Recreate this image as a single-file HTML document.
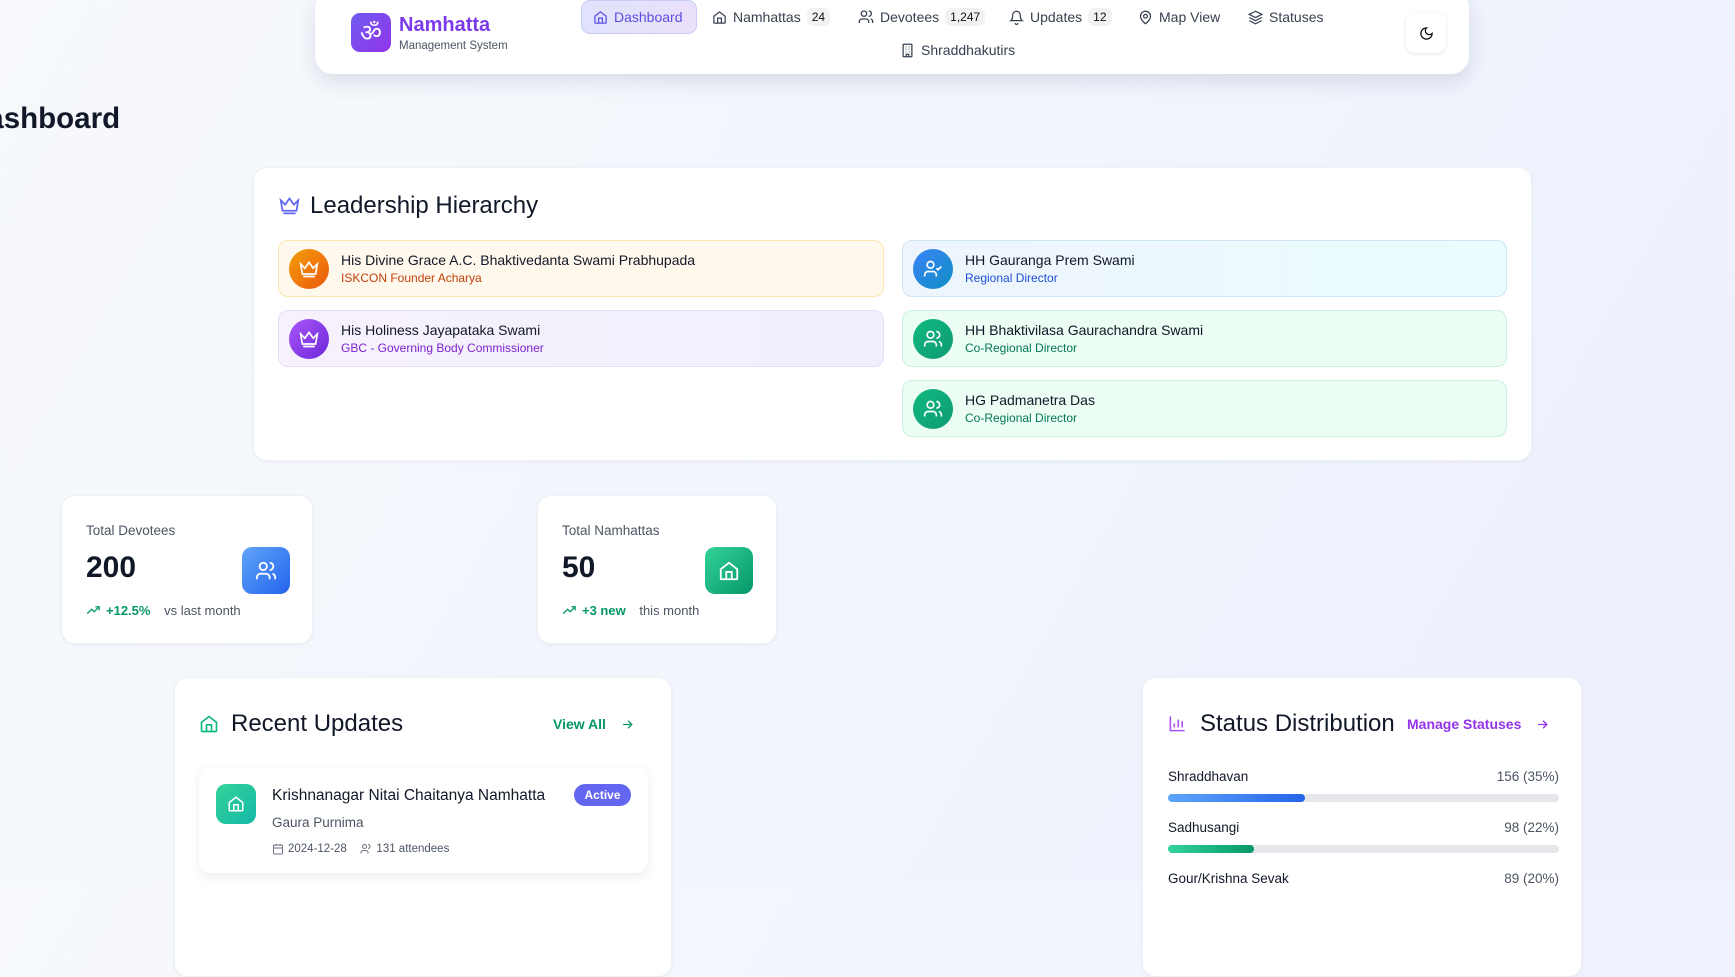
<!DOCTYPE html>
<html><head><meta charset="utf-8"><style>
*{box-sizing:border-box;margin:0;padding:0}
body{width:1735px;height:881px;overflow:hidden;position:relative;font-family:"Liberation Sans",sans-serif;background:linear-gradient(120deg,#f7f9fc 0%,#f1f5fc 50%,#eceffc 100%);color:#111827}
.abs{position:absolute}
.card{position:absolute;background:#fff;border-radius:14px;box-shadow:0 1px 3px rgba(0,0,0,.05);border:1px solid #eef1f6}
svg{display:block}
.nav{left:315px;top:-10px;width:1154px;height:84px;background:#fff;border-radius:18px;box-shadow:0 8px 20px rgba(30,40,80,.12)}
.ni{position:absolute;display:flex;align-items:center;gap:6px;font-size:14px;color:#374151;height:34px;top:0}
.badge{background:#f1f2f4;border-radius:6px;font-size:12px;padding:2px 5px;color:#111}
.lr{position:absolute;height:57px;border-radius:10px;display:flex;align-items:center;padding-left:10px}
.av{width:40px;height:40px;border-radius:50%;display:flex;align-items:center;justify-content:center;margin-right:12px}
.ln{font-size:14px;color:#111827;margin-bottom:3px}
.ls{font-size:12px}
.lab{font-size:13.5px;color:#4b5563}
</style></head><body>
<div class="abs nav">
  <div class="abs" style="left:36px;top:23px;width:40px;height:39px;border-radius:9px;background:linear-gradient(135deg,#6d5cf0,#9333ea);color:#fff;font-size:24px;display:flex;align-items:center;justify-content:center;font-family:'DejaVu Sans',sans-serif">ॐ</div>
  <div class="abs" style="left:84px;top:24px;font-size:20px;font-weight:bold;color:#7c3aed">Namhatta</div>
  <div class="abs" style="left:84px;top:50px;font-size:11.5px;color:#4b5563">Management System</div>
</div>
<div class="abs" style="left:581px;top:0;width:116px;height:34px;border-radius:9px;background:linear-gradient(90deg,#dfe3fb,#ebe0fb);border:1px solid #c9cdf5"></div>
<div class="ni" style="left:593px;color:#5b4ee0"><svg width="15" height="15" viewBox="0 0 24 24" fill="none" stroke="currentColor" stroke-width="2"><path d="M3 10l9-7 9 7v10a1 1 0 0 1-1 1H4a1 1 0 0 1-1-1z"/><path d="M9 21v-8h6v8"/></svg>Dashboard</div>
<div class="ni" style="left:712px"><svg width="15" height="15" viewBox="0 0 24 24" fill="none" stroke="currentColor" stroke-width="2"><path d="M3 10l9-7 9 7v10a1 1 0 0 1-1 1H4a1 1 0 0 1-1-1z"/><path d="M9 21v-8h6v8"/></svg>Namhattas <span class="badge">24</span></div>
<div class="ni" style="left:858px"><svg width="16" height="16" viewBox="0 0 24 24" fill="none" stroke="currentColor" stroke-width="2"><circle cx="9" cy="7" r="4"/><path d="M2 21v-2a4 4 0 0 1 4-4h6a4 4 0 0 1 4 4v2M16 3a4 4 0 0 1 0 8M22 21v-2a4 4 0 0 0-3-4"/></svg>Devotees <span class="badge">1,247</span></div>
<div class="ni" style="left:1009px"><svg width="15" height="15" viewBox="0 0 24 24" fill="none" stroke="currentColor" stroke-width="2"><path d="M6 8a6 6 0 0 1 12 0c0 7 3 9 3 9H3s3-2 3-9M10 21a2 2 0 0 0 4 0"/></svg>Updates <span class="badge">12</span></div>
<div class="ni" style="left:1138px"><svg width="15" height="15" viewBox="0 0 24 24" fill="none" stroke="currentColor" stroke-width="2"><path d="M20 10c0 6-8 12-8 12S4 16 4 10a8 8 0 0 1 16 0z"/><circle cx="12" cy="10" r="3"/></svg>Map View</div>
<div class="ni" style="left:1248px"><svg width="15" height="15" viewBox="0 0 24 24" fill="none" stroke="currentColor" stroke-width="2"><path d="M12 2L2 7l10 5 10-5zM2 12l10 5 10-5M2 17l10 5 10-5"/></svg>Statuses</div>
<div class="ni" style="left:900px;top:33px"><svg width="15" height="15" viewBox="0 0 24 24" fill="none" stroke="currentColor" stroke-width="2"><rect x="5" y="2" width="14" height="20" rx="1"/><path d="M9 6h1M14 6h1M9 10h1M14 10h1M9 14h1M14 14h1M10 22v-4h4v4"/></svg>Shraddhakutirs</div>
<div class="abs" style="left:1406px;top:13px;width:40px;height:40px;border-radius:9px;background:#fff;box-shadow:0 1px 4px rgba(0,0,0,.1);display:flex;align-items:center;justify-content:center"><svg width="15" height="15" viewBox="0 0 24 24" fill="none" stroke="#111" stroke-width="2"><path d="M12 3a6 6 0 0 0 9 9 9 9 0 1 1-9-9z"/></svg></div>

<div class="abs" style="left:-34px;top:102px;font-size:29.5px;font-weight:bold;color:#111827">Dashboard</div>

<div class="card" style="left:253px;top:167px;width:1279px;height:294px">
  <svg class="abs" style="left:25px;top:27px" width="21" height="21" viewBox="0 0 24 24" fill="none" stroke="#6366f1" stroke-width="2"><path d="M2 6l5 5 5-7 5 7 5-5-2 12H4zM5 21h14"/></svg>
  <div class="abs" style="left:56px;top:24px;font-size:24px;color:#111827">Leadership Hierarchy</div>
</div>
<div class="lr" style="left:278px;top:240px;width:606px;background:#fff8ec;border:1px solid #fde7b0"><div class="av" style="background:linear-gradient(135deg,#f59e0b,#ea580c)"><svg width="20" height="20" viewBox="0 0 24 24" fill="none" stroke="#fff" stroke-width="2"><path d="M2 6l5 5 5-7 5 7 5-5-2 12H4zM5 21h14"/></svg></div><div><div class="ln">His Divine Grace A.C. Bhaktivedanta Swami Prabhupada</div><div class="ls" style="color:#c2410c">ISKCON Founder Acharya</div></div></div>
<div class="lr" style="left:278px;top:310px;width:606px;background:linear-gradient(90deg,#f7f1fd,#eff0fc);border:1px solid #e6ddfa"><div class="av" style="background:linear-gradient(135deg,#a855f7,#6d28d9)"><svg width="20" height="20" viewBox="0 0 24 24" fill="none" stroke="#fff" stroke-width="2"><path d="M2 6l5 5 5-7 5 7 5-5-2 12H4zM5 21h14"/></svg></div><div><div class="ln">His Holiness Jayapataka Swami</div><div class="ls" style="color:#7e22ce">GBC - Governing Body Commissioner</div></div></div>
<div class="lr" style="left:902px;top:240px;width:605px;background:linear-gradient(90deg,#eef5fd,#eafcfd);border:1px solid #cfe6f5"><div class="av" style="background:linear-gradient(135deg,#3b82f6,#0e8fc4)"><svg width="20" height="20" viewBox="0 0 24 24" fill="none" stroke="#fff" stroke-width="2"><circle cx="9" cy="7" r="4"/><path d="M2 21v-2a4 4 0 0 1 4-4h6a4 4 0 0 1 4 4v2M16 11l2 2 4-4"/></svg></div><div><div class="ln">HH Gauranga Prem Swami</div><div class="ls" style="color:#1d4ed8">Regional Director</div></div></div>
<div class="lr" style="left:902px;top:310px;width:605px;background:#ecfdf4;border:1px solid #c9f1dc"><div class="av" style="background:linear-gradient(135deg,#10b981,#0f9a72)"><svg width="20" height="20" viewBox="0 0 24 24" fill="none" stroke="#fff" stroke-width="2"><circle cx="9" cy="7" r="4"/><path d="M2 21v-2a4 4 0 0 1 4-4h6a4 4 0 0 1 4 4v2M16 3a4 4 0 0 1 0 8M22 21v-2a4 4 0 0 0-3-4"/></svg></div><div><div class="ln">HH Bhaktivilasa Gaurachandra Swami</div><div class="ls" style="color:#047857">Co-Regional Director</div></div></div>
<div class="lr" style="left:902px;top:380px;width:605px;background:#ecfdf4;border:1px solid #c9f1dc"><div class="av" style="background:linear-gradient(135deg,#10b981,#0f9a72)"><svg width="20" height="20" viewBox="0 0 24 24" fill="none" stroke="#fff" stroke-width="2"><circle cx="9" cy="7" r="4"/><path d="M2 21v-2a4 4 0 0 1 4-4h6a4 4 0 0 1 4 4v2M16 3a4 4 0 0 1 0 8M22 21v-2a4 4 0 0 0-3-4"/></svg></div><div><div class="ln">HG Padmanetra Das</div><div class="ls" style="color:#047857">Co-Regional Director</div></div></div>

<div class="card" style="left:61px;top:495px;width:252px;height:149px">
  <div class="abs lab" style="left:24px;top:27px">Total Devotees</div>
  <div class="abs" style="left:24px;top:55px;font-size:30px;font-weight:bold">200</div>
  <div class="abs" style="left:180px;top:51px;width:48px;height:47px;border-radius:10px;background:linear-gradient(135deg,#60a5fa,#2563eb);display:flex;align-items:center;justify-content:center"><svg width="22" height="22" viewBox="0 0 24 24" fill="none" stroke="#fff" stroke-width="2"><circle cx="9" cy="7" r="4"/><path d="M2 21v-2a4 4 0 0 1 4-4h6a4 4 0 0 1 4 4v2M16 3a4 4 0 0 1 0 8M22 21v-2a4 4 0 0 0-3-4"/></svg></div>
  <div class="abs" style="left:24px;top:107px;font-size:13px;display:flex;align-items:center;gap:5px"><svg width="15" height="15" viewBox="0 0 24 24" fill="none" stroke="#059669" stroke-width="2"><path d="M2 17l7-7 4 4 8-8M15 6h6v6"/></svg><b style="color:#059669">+12.5%</b>&nbsp;<span style="color:#4b5563">vs last month</span></div>
</div>
<div class="card" style="left:537px;top:495px;width:240px;height:149px">
  <div class="abs lab" style="left:24px;top:27px">Total Namhattas</div>
  <div class="abs" style="left:24px;top:55px;font-size:30px;font-weight:bold">50</div>
  <div class="abs" style="left:167px;top:51px;width:48px;height:47px;border-radius:10px;background:linear-gradient(135deg,#34d399,#059669);display:flex;align-items:center;justify-content:center"><svg width="22" height="22" viewBox="0 0 24 24" fill="none" stroke="#fff" stroke-width="2"><path d="M3 10l9-7 9 7v10a1 1 0 0 1-1 1H4a1 1 0 0 1-1-1z"/><path d="M9 21v-8h6v8"/></svg></div>
  <div class="abs" style="left:24px;top:107px;font-size:13px;display:flex;align-items:center;gap:5px"><svg width="15" height="15" viewBox="0 0 24 24" fill="none" stroke="#059669" stroke-width="2"><path d="M2 17l7-7 4 4 8-8M15 6h6v6"/></svg><b style="color:#059669">+3 new</b>&nbsp;<span style="color:#4b5563">this month</span></div>
</div>

<div class="card" style="left:174px;top:677px;width:498px;height:300px">
  <svg class="abs" style="left:24px;top:36px" width="20" height="20" viewBox="0 0 24 24" fill="none" stroke="#10b981" stroke-width="2"><path d="M3 10l9-7 9 7v10a1 1 0 0 1-1 1H4a1 1 0 0 1-1-1z"/><path d="M9 21v-8h6v8"/></svg>
  <div class="abs" style="left:56px;top:32px;font-size:24px">Recent Updates</div>
  <div class="abs" style="left:378px;top:38px;font-size:14px;font-weight:bold;color:#059669;display:flex;gap:14px;align-items:center">View All <svg width="15" height="15" viewBox="0 0 24 24" fill="none" stroke="#059669" stroke-width="2"><path d="M5 12h14M13 6l6 6-6 6"/></svg></div>
  <div class="abs" style="left:24px;top:89px;width:449px;height:106px;border-radius:12px;background:#fff;box-shadow:0 3px 12px rgba(0,0,0,.08)">
    <div class="abs" style="left:17px;top:17px;width:40px;height:40px;border-radius:10px;background:linear-gradient(135deg,#34d399,#14b8a6);display:flex;align-items:center;justify-content:center"><svg width="18" height="18" viewBox="0 0 24 24" fill="none" stroke="#fff" stroke-width="2"><path d="M3 10l9-7 9 7v10a1 1 0 0 1-1 1H4a1 1 0 0 1-1-1z"/><path d="M9 21v-8h6v8"/></svg></div>
    <div class="abs" style="left:73px;top:20px;font-size:15.5px;color:#111827">Krishnanagar Nitai Chaitanya Namhatta</div>
    <div class="abs" style="left:375px;top:17px;width:57px;height:22px;border-radius:11px;background:#6366f1;color:#fff;font-size:12px;font-weight:bold;display:flex;align-items:center;justify-content:center">Active</div>
    <div class="abs" style="left:73px;top:48px;font-size:13.5px;color:#4b5563">Gaura Purnima</div>
    <div class="abs" style="left:73px;top:76px;font-size:11.5px;color:#4b5563;display:flex;align-items:center;gap:4px"><svg width="12" height="12" viewBox="0 0 24 24" fill="none" stroke="#6b7280" stroke-width="2"><rect x="3" y="4" width="18" height="18" rx="2"/><path d="M3 10h18M8 2v4M16 2v4"/></svg>2024-12-28 &nbsp;&nbsp;<svg width="12" height="12" viewBox="0 0 24 24" fill="none" stroke="#6b7280" stroke-width="2"><circle cx="9" cy="7" r="4"/><path d="M2 21v-2a4 4 0 0 1 4-4h6a4 4 0 0 1 4 4v2M16 3a4 4 0 0 1 0 8"/></svg>131 attendees</div>
  </div>
</div>

<div class="card" style="left:1142px;top:677px;width:440px;height:300px">
  <svg class="abs" style="left:25px;top:36px" width="19" height="19" viewBox="0 0 24 24" fill="none" stroke="#a855f7" stroke-width="2"><path d="M3 3v18h18M8 17v-5M13 17V7M18 17v-8"/></svg>
  <div class="abs" style="left:57px;top:32px;font-size:24px">Status Distribution</div>
  <div class="abs" style="left:264px;top:38px;font-size:14px;font-weight:bold;color:#9333ea;display:flex;gap:14px;align-items:center">Manage Statuses <svg width="15" height="15" viewBox="0 0 24 24" fill="none" stroke="#9333ea" stroke-width="2"><path d="M5 12h14M13 6l6 6-6 6"/></svg></div>
  <div class="abs" style="left:25px;top:91px;width:391px;font-size:13.5px;display:flex;justify-content:space-between"><span style="color:#111827">Shraddhavan</span><span style="color:#4b5563">156 (35%)</span></div>
  <div class="abs" style="left:25px;top:116px;width:391px;height:8px;border-radius:4px;background:#e5e7eb"><div style="width:137px;height:8px;border-radius:4px;background:linear-gradient(90deg,#60a5fa,#2563eb)"></div></div>
  <div class="abs" style="left:25px;top:142px;width:391px;font-size:13.5px;display:flex;justify-content:space-between"><span style="color:#111827">Sadhusangi</span><span style="color:#4b5563">98 (22%)</span></div>
  <div class="abs" style="left:25px;top:167px;width:391px;height:8px;border-radius:4px;background:#e5e7eb"><div style="width:86px;height:8px;border-radius:4px;background:linear-gradient(90deg,#34d399,#059669)"></div></div>
  <div class="abs" style="left:25px;top:193px;width:391px;font-size:13.5px;display:flex;justify-content:space-between"><span style="color:#111827">Gour/Krishna Sevak</span><span style="color:#4b5563">89 (20%)</span></div>
</div>
</body></html>
